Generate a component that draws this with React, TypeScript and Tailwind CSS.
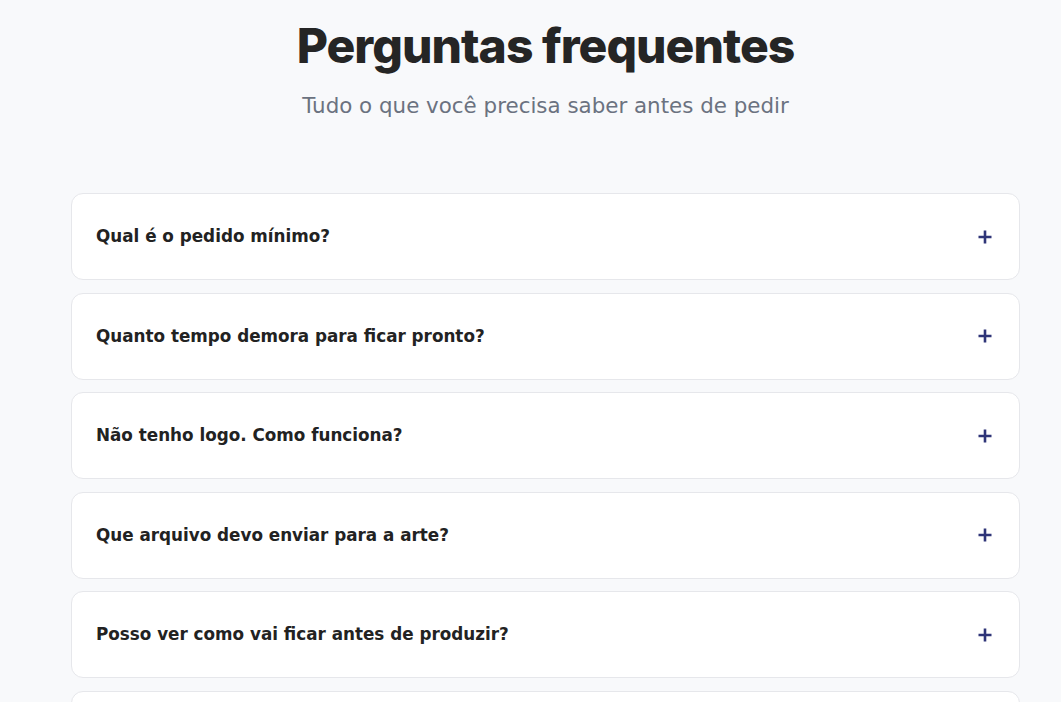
const FAQ = [
  'Qual é o pedido mínimo?',
  'Quanto tempo demora para ficar pronto?',
  'Não tenho logo. Como funciona?',
  'Que arquivo devo enviar para a arte?',
  'Posso ver como vai ficar antes de produzir?',
  'Vocês entregam para todo o Brasil?',
];

function PlusIcon() {
  return (
    <svg width="20" height="20" viewBox="0 0 20 20" className="shrink-0">
      <path d="M3.5 10h13M10 3.5v13" stroke="#2f3578" strokeWidth="2.6" fill="none" />
    </svg>
  );
}

export default function App() {
  return (
    <div
      className="min-h-screen bg-[#f8f9fb] pl-[71px] pr-[41px] pt-[18px] pb-10 text-[#222]"
      style={{ fontFamily: '"DejaVu Sans", "Noto Sans", sans-serif' }}
    >
      <div className="text-center">
        <h1
          className="text-[48px] leading-[56px] font-extrabold tracking-[-0.02em] text-[#252525]"
          style={{ fontFamily: 'Inter, "Noto Sans", sans-serif' }}
        >
          Perguntas frequentes
        </h1>
        <p className="mt-[18px] text-[21.4px] leading-7 text-[#6b7280]">
          Tudo o que você precisa saber antes de pedir
        </p>
      </div>

      <div className="mt-[73px] flex flex-col gap-[12.6px]">
        {FAQ.map((q) => (
          <div
            key={q}
            className="h-[87px] rounded-xl border border-[#e6e7eb] bg-white px-6 flex items-center justify-between"
          >
            <span className="text-[16.8px] font-bold text-[#222]">{q}</span>
            <PlusIcon />
          </div>
        ))}
      </div>
    </div>
  );
}
